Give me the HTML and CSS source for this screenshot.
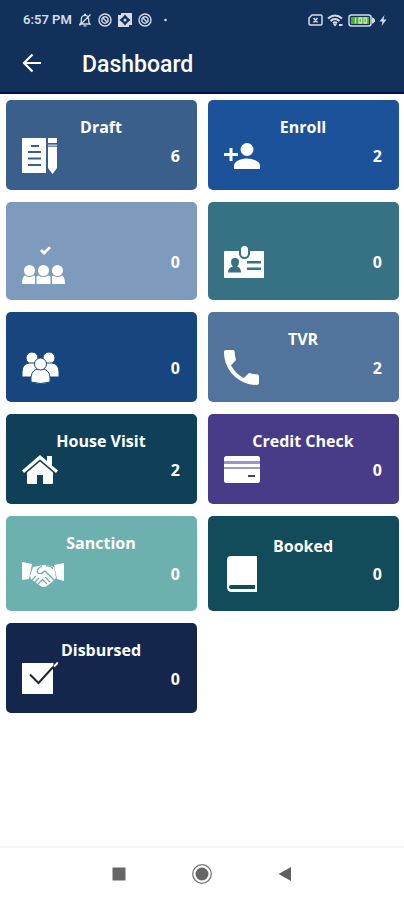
FILE: index.html
```html
<!DOCTYPE html>
<html lang="en">
<head>
<meta charset="utf-8">
<meta name="viewport" content="width=device-width, initial-scale=1">
<title>Dashboard</title>
<link rel="stylesheet" href="styles.css">
</head>
<body>
<header class="top">
  <div class="status">
    <span class="time">6:57 PM</span>
    <svg width="14" height="14" viewBox="0 0 14 14" fill="none" stroke="currentColor" stroke-width="1.3"><path d="M2 11h10l-1.300-2V6a3.700 3.700 0 0 0-7.400 0v3zM5.500 12.800h3M1.500 12.500l11-11M6 1.500h2"/></svg>
    <svg width="14" height="14" viewBox="0 0 14 14" fill="none" stroke="currentColor" stroke-width="1.400"><circle cx="7" cy="7" r="6"/><path d="M4 5.500a3.500 3.500 0 0 1 6 0v3a3.500 3.500 0 0 1-6 0zM4.500 4.500l5 5"/></svg>
    <svg width="14" height="14" viewBox="0 0 14 14"><path fill="currentColor" d="M0 0h14v14H0z"/><path fill="#12315a" d="M7 1.500 9.500 4.500 12.500 7 9.500 9.500 7 12.500 4.500 9.500 1.500 7 4.500 4.500zM0 0h3v2H0zM11 12h3v2h-3z"/><circle cx="7" cy="7" r="1.500" fill="currentColor"/></svg>
    <svg width="14" height="14" viewBox="0 0 14 14" fill="none" stroke="currentColor" stroke-width="1.400"><circle cx="7" cy="7" r="6"/><path d="M4 5.500a3.500 3.500 0 0 1 6 0v3a3.500 3.500 0 0 1-6 0zM4.500 4.500l5 5"/></svg>
    <svg class="dot" width="3" height="14" viewBox="0 0 3 14"><circle cx="1.500" cy="7" r="1.300" fill="currentColor"/></svg>
    <div class="system">
      <svg width="15" height="12" viewBox="0 0 15 12" fill="none" stroke="currentColor" stroke-width="1.500"><path d="M4 1h8.500q1.500 0 1.500 1.500v7q0 1.500-1.500 1.500h-10Q1 11 1 9.500V4zM5.500 4l4 4.500M9.500 4l-4 4.500"/></svg>
      <svg width="17" height="13" viewBox="0 0 17 13" fill="none" stroke="currentColor" stroke-width="2"><path d="M1 4.500q7-6 14 0M3.500 7q4.500-4 9 0M6 9.300q2-1.800 4 0"/><path fill="currentColor" stroke="none" d="M8 12.500 6 10h4zM12 10h3.500v2H12z"/></svg>
      <svg width="27" height="13" viewBox="0 0 27 13"><rect x="1" y="1" width="22" height="11" rx="2.500" fill="none" stroke="currentColor" stroke-width="1.500"/><path fill="currentColor" d="M24 3.500h1l2 2v2l-2 2h-1z"/><path fill="#4fae2d" d="M3 3h18v7H3z"/><path fill="none" stroke="#c9edb5" stroke-width="1.300" d="M7.500 3.500v6M11 4h2.500v5H11zM16 4h2.500v5H16z"/></svg>
      <svg width="8" height="13" viewBox="0 0 8 13"><path fill="currentColor" d="M5.500 1 .5 7.500h3L2.500 12l5-6.500h-3z"/></svg>
    </div>
  </div>
  <div class="bar">
    <button class="back" type="button" aria-label="Back">
      <svg width="20" height="20" viewBox="0 0 20 20" fill="none" stroke="currentColor" stroke-width="2.200"><path d="M19 10H2M10.500 1.500 2 10l8.500 8.500"/></svg>
    </button>
    <h1>Dashboard</h1>
  </div>
</header>

<main class="grid">
  <a class="card draft" href="#draft">
    <span class="title">Draft</span>
    <span class="body">
      <svg width="36" height="36" viewBox="0 0 36 36"><path fill="#fff" d="M0 0h24v35H0zM26 0h9v5h-9zM26 9h9v21l-4.500 6L26 30z"/><path fill="#b6c1d3" d="M26 6.500h9v2h-9z"/><path stroke="#3b5f8b" stroke-width="2" d="M9 8h8M6 14h13M6 20.500h13M6 27h13"/></svg>
      <span class="count">6</span>
    </span>
  </a>
  <a class="card enroll" href="#enroll">
    <span class="title">Enroll</span>
    <span class="body">
      <svg width="37" height="28" viewBox="0 0 37 28" fill="#fff"><circle cx="23" cy="7.500" r="6.500"/><path d="M10 27v-3.500c0-4.500 8-7 13-7s13 2.500 13 7V27zM5.500 6h3v5H14v3H8.500v5h-3v-5H0v-3h5.500z"/></svg>
      <span class="count">2</span>
    </span>
  </a>
  <a class="card approved" href="#approved" aria-label="Approved groups">
    <span class="title"></span>
    <span class="body">
      <svg width="43" height="45" viewBox="0 0 43 45" fill="#fff"><path d="m18 12 2-2 2 2 5-4.500 2 1.500-7 7z"/><circle cx="7.500" cy="31.500" r="5.500"/><circle cx="21.500" cy="31.500" r="5.500"/><circle cx="35.500" cy="31.500" r="5.500"/><path d="M0 45q0-7 3-8.500 4.500 3 9 0l1 1V45zM14.500 45v-7.500l2-1q5 3 10 0l2 1V45zM30 45v-7.500l1.500-1q4 3 8.500 0 3 1.500 3 8.500z"/></svg>
      <span class="count">0</span>
    </span>
  </a>
  <a class="card identity" href="#identity" aria-label="Identity">
    <span class="title"></span>
    <span class="body">
      <svg width="41" height="33" viewBox="0 0 41 33"><path fill="#fff" d="M1 6h39v27H1q-1 0-1-1V7q0-1 1-1z"/><g fill="#377184"><rect x="15" y="0" width="11" height="14" rx="5.500"/><path d="M7 17q0-4 4-4t4 4q0 3-2 4.500 4 1 4 6H4q0-5 5-6-2-1.500-2-4.500zM23 16h14v2.500H23zM23 22.500h14V25H23z"/></g><rect x="17" y="1" width="7" height="11" rx="3.500" fill="#fff"/></svg>
      <span class="count">0</span>
    </span>
  </a>
  <a class="card groups" href="#groups" aria-label="Groups">
    <span class="title"></span>
    <span class="body">
      <svg width="37" height="32" viewBox="0 0 37 32" fill="#fff" stroke="#16467d" stroke-width="1"><circle cx="10" cy="6" r="6"/><circle cx="27" cy="6" r="6"/><path d="M0 25v-5q0-8 7-9h6q5 1 5 7v7zM37 25v-5q0-8-7-9h-6q-5 1-5 7v7z"/><path d="M9 30q-1-11 6-13h7q7 2 6 13-9 3-19 0z"/><circle cx="18.500" cy="12" r="6"/></svg>
      <span class="count">0</span>
    </span>
  </a>
  <a class="card tvr" href="#tvr">
    <span class="title">TVR</span>
    <span class="body">
      <svg width="35" height="35" viewBox="3 3 18 18" fill="#fff"><path d="M6.620 10.790c1.440 2.830 3.760 5.140 6.590 6.590l2.200-2.200c.27-.27.67-.36 1.020-.24 1.120.37 2.330.57 3.570.57.55 0 1 .45 1 1V20c0 .55-.45 1-1 1-9.390 0-17-7.610-17-17 0-.55.45-1 1-1h3.500c.55 0 1 .45 1 1 0 1.250.2 2.450.57 3.570.11.35.03.74-.25 1.020z"/></svg>
      <span class="count">2</span>
    </span>
  </a>
  <a class="card house" href="#house-visit">
    <span class="title">House Visit</span>
    <span class="body">
      <svg width="36" height="29" viewBox="0 0 36 29" fill="#fff"><path d="M18 0 25 6V1h5v9.500l6 5-2 2.500L18 4.500 2 18l-2-2.500z"/><path d="M18 6.500 31 17.500V28q0 1-1 1h-9v-9h-6v9H6q-1 0-1-1V17.500z"/></svg>
      <span class="count">2</span>
    </span>
  </a>
  <a class="card credit" href="#credit-check">
    <span class="title">Credit Check</span>
    <span class="body">
      <svg width="36" height="27" viewBox="0 0 36 27"><rect width="36" height="27" rx="2.500" fill="#fff"/><path fill="#9d94c8" d="M0 5h36v3H0zM0 11h36v2H0z"/><path fill="#483b88" d="M24 19h7v2h-7z"/></svg>
      <span class="count">0</span>
    </span>
  </a>
  <a class="card sanction" href="#sanction">
    <span class="title">Sanction</span>
    <span class="body body-tall">
      <svg width="42" height="25" viewBox="0 0 42 25"><path fill="#fff" d="M0 0 10 2 7 17 0 18zM42 1 32 3l3 14 7 2zM11 5l6-1 3-1h6l6 2 2 11-3 3-2 2-3 2-3 2h-3L9 17l-1-3z"/><path fill="none" stroke="#6db1af" stroke-width="1.300" d="M20 4q-7 4-4 7 3 2 7-2l9 9M23 15l5 5M20 17l5 5M10 18l4-4M13 20l4-4M16 22l4-4M24 4q5-1 7 3"/></svg>
      <span class="count">0</span>
    </span>
  </a>
  <a class="card booked" href="#booked">
    <span class="title">Booked</span>
    <span class="body">
      <svg width="36" height="36" viewBox="0 0 36 36"><path fill="#fff" d="M7 0h26v36H8q-5 0-5-5V4q0-4 4-4z"/><path fill="#124c5a" d="M7 29h24v4H8q-3 0-3-2 0-2 2-2z"/></svg>
      <span class="count">0</span>
    </span>
  </a>
  <a class="card disbursed" href="#disbursed">
    <span class="title">Disbursed</span>
    <span class="body">
      <svg width="36" height="33" viewBox="0 0 36 33" fill="none"><path fill="#fff" d="M0 1h31v31H0z"/><path stroke="#20242c" stroke-width="2" d="m8 12.500 8.500 8.500L32 4"/><path stroke="#fff" stroke-width="2" d="m32 4.500 4-4M29.500 4l1.500-3"/></svg>
      <span class="count">0</span>
    </span>
  </a>
</main>

<nav class="nav">
  <button type="button" aria-label="Recent apps"><svg width="20" height="20" viewBox="0 0 20 20"><path fill="#666" d="M3.500 3.500h13v13h-13z"/></svg></button>
  <button type="button" aria-label="Home"><svg width="20" height="20" viewBox="0 0 20 20"><circle cx="10" cy="10" r="9.300" fill="none" stroke="#777" stroke-width="1.300"/><circle cx="10" cy="10" r="6.500" fill="#666"/></svg></button>
  <button type="button" aria-label="Go back"><svg width="20" height="20" viewBox="0 0 20 20"><path fill="#606060" d="M16 3v14L3.500 10z"/></svg></button>
</nav>
</body>
</html>
```
FILE: styles.css
```css
* {
  box-sizing: border-box;
}

body {
  margin: 0;
  min-height: 100vh;
  display: flex;
  flex-direction: column;
  background: #fff;
  font-family: "Open Sans", sans-serif;
}

svg {
  display: block;
  flex: none;
}

button {
  border: 0;
  padding: 0;
  background: none;
  color: inherit;
}

.top {
  background: #12315a;
  border-bottom: 2px solid #04104a;
  color: #fff;
  font-family: Roboto, sans-serif;
  padding-top: 12px;
}

.status {
  display: flex;
  align-items: center;
  gap: 6px;
  height: 16px;
  padding: 0 17px 0 23px;
  color: #d5dce8;
}

.time {
  font-size: 13px;
  font-weight: 600;
  line-height: 16px;
}

.dot {
  margin-left: 6px;
}

.system {
  display: flex;
  align-items: center;
  gap: 4px;
  margin-left: auto;
}

.bar {
  display: flex;
  align-items: center;
  gap: 40px;
  height: 64px;
  padding: 10px 22px 0;
}

.bar h1 {
  margin: 0;
  font-size: 23px;
  font-weight: 500;
  line-height: 28px;
}

.back {
  padding-bottom: 4px;
}

.grid {
  display: grid;
  grid-template-columns: 1fr 1fr;
  gap: 12px 11px;
  padding: 6px 5px 12px 6px;
}

.card {
  display: flex;
  flex-direction: column;
  justify-content: center;
  padding: 17px 17px 16px 16px;
  border-radius: 5px;
  color: #fff;
  font-size: 16px;
  font-weight: 700;
  line-height: 20px;
  text-decoration: none;
}

.title {
  min-height: 20px;
  text-align: center;
}

.body {
  display: flex;
  align-items: center;
  justify-content: space-between;
  min-height: 37px;
}

.body-tall {
  min-height: 42px;
}

.draft { background: #3b5f8b; }
.enroll { background: #1b5299; }
.approved { background: #7e9abd; }
.identity { background: #377184; }
.groups { background: #16467d; }
.tvr { background: #52749c; }
.house { background: #104058; }
.credit { background: #483b88; }
.sanction { background: #6db1af; }
.booked { background: #124c5a; }
.disbursed { background: #14264b; }

.nav {
  display: flex;
  justify-content: center;
  gap: 63px;
  margin-top: auto;
  padding: 16px 0;
  border-top: 2px solid #f5f5f5;
}
```
